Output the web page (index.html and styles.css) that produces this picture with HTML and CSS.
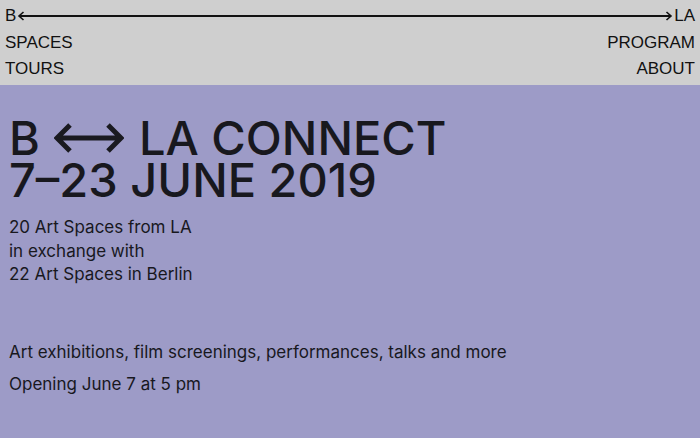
FILE: index.html
```
<!DOCTYPE html>
<html lang="en">
<head>
    <meta charset="UTF-8">
    <title>B - LA Connect</title>
    <link rel="stylesheet" href="styles.css">
</head>
<body>
<header class="top">
    <div class="route">
        <a href="#">B</a>
        <svg class="head" width="8" height="10" viewBox="0 0 8 10"><path d="M6.5 1 L2 5 L6.5 9" fill="none" stroke="#111" stroke-width="1.6"/></svg>
        <span class="line"></span>
        <svg class="head" width="8" height="10" viewBox="0 0 8 10"><path d="M1.5 1 L6 5 L1.5 9" fill="none" stroke="#111" stroke-width="1.6"/></svg>
        <a href="#">LA</a>
    </div>
    <nav class="menu">
        <div class="col">
            <a href="#">SPACES</a>
            <a href="#">TOURS</a>
        </div>
        <div class="col right">
            <a href="#">PROGRAM</a>
            <a href="#">ABOUT</a>
        </div>
    </nav>
</header>

<main class="intro">
    <h1>
        B <svg class="both" width="70" height="32" viewBox="0 0 70 32"><path d="M3 16 H67 M16 3 L3 16 L16 29 M54 3 L67 16 L54 29" fill="none" stroke="#1a1a20" stroke-width="5"/></svg> LA CONNECT<br>
        7–23 JUNE 2019
    </h1>
    <p class="count">
        20 Art Spaces from LA<br>
        in exchange with<br>
        22 Art Spaces in Berlin
    </p>
    <p class="what">Art exhibitions, film screenings, performances, talks and more</p>
    <p class="when">Opening June 7 at 5 pm</p>
</main>
</body>
</html>
```

FILE: styles.css
```
body {
    margin: 0;
    background: #9d9bc7;
    color: #18181e;
    font-family: Inter, "Liberation Sans", sans-serif;
}
a {
    color: inherit;
    text-decoration: none;
}

.top {
    background: #cfcfcf;
    height: 85px;
    padding: 6px 5px 0 5px;
    box-sizing: border-box;
    font-family: "Liberation Sans", Arial, sans-serif;
    font-size: 17px;
    line-height: 26px;
    color: #111;
}
.route {
    display: flex;
    align-items: center;
    height: 20px;
    margin-bottom: 4px;
}
.route .line {
    flex: 1;
    height: 2px;
    background: #111;
}
.route .head {
    display: block;
}
.route .head:first-of-type {
    margin-left: 1px;
    margin-right: -6px;
}
.route .head:last-of-type {
    margin-left: -6px;
    margin-right: 1px;
}
.menu {
    display: flex;
    justify-content: space-between;
}
.col {
    display: flex;
    flex-direction: column;
}
.col.right {
    align-items: flex-end;
}

.intro {
    padding: 32px 9px 12px;
}
h1 {
    margin: 0;
    font-size: 47px;
    font-weight: 500;
    line-height: 42px;
}
h1 .both {
    vertical-align: 1px;
    margin: 0 2px;
}
.count {
    margin: 15px 0 0;
    font-size: 17px;
    line-height: 23.5px;
}
.what {
    margin: 54px 0 0;
    font-size: 17px;
    line-height: 23px;
}
.when {
    margin: 9px 0 0;
    font-size: 17px;
    line-height: 23px;
}
```
